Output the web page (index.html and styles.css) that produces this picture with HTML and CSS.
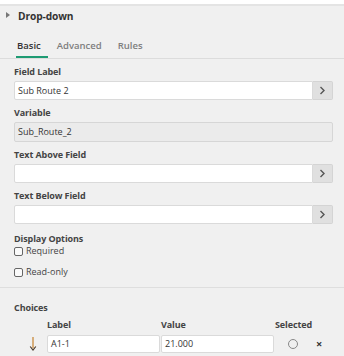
FILE: index.html
```html
<!DOCTYPE html>
<html>
<head>
<meta charset="utf-8">
<link rel="stylesheet" href="styles.css">
</head>
<body>
<div class="topstrip"></div>
<div class="panel">
  <div class="header">
    <span class="caret"></span>
    <span class="title">Drop-down</span>
  </div>
  <div class="tabs">
    <div class="tab active">Basic</div>
    <div class="tab">Advanced</div>
    <div class="tab">Rules</div>
  </div>
  <div class="form">
    <div class="group">
      <div class="label">Field Label</div>
      <div class="inputrow">
        <div class="input">Sub Route 2</div>
        <div class="btn"><svg width="7" height="9" viewBox="0 0 7 9"><path d="M1.5 1 L5 4.5 L1.5 8" fill="none" stroke="#555" stroke-width="1.4"/></svg></div>
      </div>
    </div>
    <div class="group">
      <div class="label">Variable</div>
      <div class="input disabled">Sub_Route_2</div>
    </div>
    <div class="group">
      <div class="label">Text Above Field</div>
      <div class="inputrow">
        <div class="input"></div>
        <div class="btn"><svg width="7" height="9" viewBox="0 0 7 9"><path d="M1.5 1 L5 4.5 L1.5 8" fill="none" stroke="#555" stroke-width="1.4"/></svg></div>
      </div>
    </div>
    <div class="group">
      <div class="label">Text Below Field</div>
      <div class="inputrow">
        <div class="input"></div>
        <div class="btn"><svg width="7" height="9" viewBox="0 0 7 9"><path d="M1.5 1 L5 4.5 L1.5 8" fill="none" stroke="#555" stroke-width="1.4"/></svg></div>
      </div>
    </div>
    <div class="group options">
      <div class="label">Display Options</div>
      <div class="check"><span class="box"></span>Required</div>
      <div class="check second"><span class="box"></span>Read-only</div>
    </div>
  </div>
  <div class="choices">
    <div class="label">Choices</div>
    <div class="chead">
      <span class="c-lab">Label</span>
      <span class="c-val">Value</span>
      <span class="c-sel">Selected</span>
    </div>
    <div class="crow">
      <span class="arrow"><svg width="8" height="14" viewBox="0 0 8 14"><path d="M4 0 V11" stroke="#c98a3c" stroke-width="1.3"/><path d="M1.2 9.5 L4 13 L6.8 9.5" fill="none" stroke="#4a3a2a" stroke-width="1.2"/></svg></span>
      <div class="input cin">A1-1</div>
      <div class="input cin">21.000</div>
      <span class="radio"></span>
      <span class="del">×</span>
    </div>
  </div>
</div>
</body>
</html>
```

FILE: styles.css
```css
html, body {
  margin: 0;
  padding: 0;
}
body {
  background: #f0f0f0;
  font-family: "Open Sans", "Segoe UI", sans-serif;
  color: #3a3a3a;
  width: 344px;
  height: 356px;
  overflow: hidden;
}
.topstrip {
  height: 4px;
  background: #ffffff;
  border-bottom: 2px solid #e4e4e4;
}
.panel {
  background: #f0f0f0;
}
.header {
  display: flex;
  align-items: center;
  height: 20px;
  padding-left: 6px;
}
.caret {
  width: 0;
  height: 0;
  border-left: 4px solid #777;
  border-top: 3px solid transparent;
  border-bottom: 3px solid transparent;
  margin-right: 8px;
  margin-top: -3px;
}
.title {
  font-size: 10.2px;
  font-weight: 700;
  color: #333;
  letter-spacing: -0.1px;
}
.tabs {
  display: flex;
  margin-top: 9px;
  padding-left: 16px;
  border-bottom: 1px solid #dcdcdc;
}
.tab {
  font-size: 9.5px;
  font-weight: 600;
  color: #7e7e7e;
  padding: 4px 7px 3px 1px;
  margin-right: 8px;
  border-bottom: 2px solid transparent;
  line-height: 14px;
}
.tab.active {
  color: #333;
  border-bottom-color: #1e9b73;
}
.form {
  padding: 7px 11px 9px 14px;
  border-bottom: 1px solid #dedede;
}
.group {
  margin-bottom: 7px;
}
.label {
  font-size: 9px;
  font-weight: 700;
  color: #444;
  line-height: 12px;
  margin-bottom: 3px;
  letter-spacing: -0.1px;
}
.inputrow {
  display: flex;
}
.input {
  box-sizing: border-box;
  height: 19px;
  background: #fff;
  border: 1px solid #dadada;
  border-radius: 2px;
  font-size: 9px;
  line-height: 17px;
  padding-left: 3px;
  color: #333;
  flex: 1;
}
.inputrow .input {
  border-radius: 2px 0 0 2px;
}
.input.disabled {
  background: #ebebeb;
  height: 20px;
  line-height: 18px;
  border-color: #d6d6d6;
}
.btn {
  box-sizing: border-box;
  width: 20px;
  height: 19px;
  background: #e0e0e0;
  border: 1px solid #d4d4d4;
  border-left: none;
  border-radius: 0 2px 2px 0;
  display: flex;
  align-items: center;
  justify-content: center;
}
.options {
  margin-top: 9px;
  margin-bottom: 0;
}
.options .label {
  margin-bottom: 0;
}
.check {
  display: flex;
  align-items: center;
  font-size: 9px;
  color: #444;
  line-height: 12px;
}
.check.second {
  margin-top: 9px;
}
.box {
  box-sizing: border-box;
  width: 9px;
  height: 9px;
  border: 1px solid #666;
  border-radius: 2px;
  background: #fafafa;
  margin-right: 3px;
}
.choices {
  padding: 14px 11px 0 14px;
}
.chead {
  display: flex;
  font-size: 9px;
  font-weight: 700;
  color: #444;
  line-height: 12px;
  margin-top: 5px;
  margin-bottom: 4px;
  letter-spacing: -0.1px;
}
.choices .label {
  margin-bottom: 0;
}
.c-lab { margin-left: 33px; width: 114px; }
.c-val { width: 114px; }
.crow {
  display: flex;
  align-items: center;
}
.arrow {
  width: 33px;
  display: flex;
  justify-content: center;
  padding-left: 4px;
  box-sizing: border-box;
}
.cin {
  flex: none;
  width: 113px;
  margin-right: 1px;
  height: 18px;
  line-height: 16px;
}
.radio {
  box-sizing: border-box;
  width: 10px;
  height: 10px;
  border: 1px solid #888;
  border-radius: 50%;
  margin-left: 13px;
}
.del {
  font-size: 11px;
  font-weight: 700;
  color: #333;
  margin-left: 18px;
  line-height: 12px;
}
```
